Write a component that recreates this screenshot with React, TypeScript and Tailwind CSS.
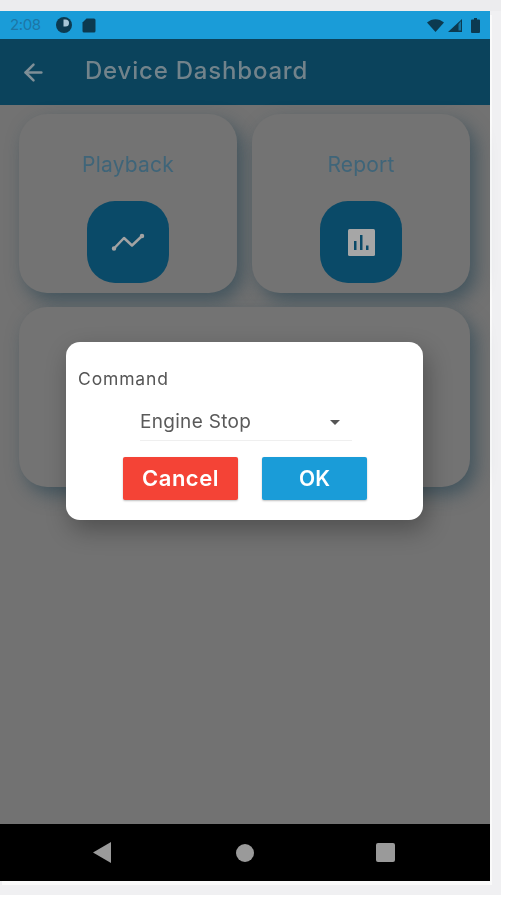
import { ArrowLeft } from "lucide-react";

const CardIcon = ({ children }: { children: React.ReactNode }) => (
  <div className="w-[82px] h-[82px] rounded-[28px] bg-[#0a4a68] flex items-center justify-center">
    {children}
  </div>
);

const Card = ({ title, children }: { title: string; children: React.ReactNode }) => (
  <div className="flex-1 h-[179px] rounded-[28px] bg-[#737373] shadow-[6px_8px_18px_rgba(35,65,80,0.6)] flex flex-col items-center pt-[38px]">
    <span className="text-[21px] leading-[26px] tracking-[0.2px] text-[#3f6579] mb-[23px]">{title}</span>
    {children}
  </div>
);

const App = () => {
  return (
    <div className="w-[512px] h-[900px] bg-white overflow-hidden font-['Inter',sans-serif]">
      <div className="w-[501px] h-[895px] bg-[#f0f0f2] blur-[0.5px] flex flex-col">
        <div className="h-[11px] bg-[#ececee] shrink-0" />
        <div className="relative w-[490px] h-[870px] flex flex-col shrink-0 shadow-[2px_4px_0_#fafafa]">
          {/* status bar */}
          <div className="h-[28px] bg-[#1a9cd8] flex items-center pl-[10px] pr-[10px] shrink-0">
            <span className="text-[15px] tracking-[-0.4px] text-[#1d76a6] w-[44px]">2:08</span>
            <svg width="20" height="20" viewBox="0 0 20 20">
              <circle cx="10" cy="10" r="8" fill="#0c3a50" />
              <path d="M9.500 4.500h2a3.500 3.500 0 0 1 0 7h-2z" fill="#a9c6d6" />
            </svg>
            <svg width="14" height="15" viewBox="0 0 14 15" className="ml-[8px]">
              <path d="M4.500 0.500H12a1.500 1.500 0 0 1 1.500 1.500V13a1.500 1.500 0 0 1-1.500 1.500H2A1.500 1.500 0 0 1 0.500 13V4.500z" fill="#0c3a50" />
            </svg>
            <div className="flex-1" />
            <svg width="17" height="13" viewBox="0 0 17 13">
              <path d="M0 3.500C5-1 12-1 17 3.500L8.500 13z" fill="#0c3a50" />
            </svg>
            <svg width="14" height="13" viewBox="0 0 14 13" className="ml-[4px]">
              <path d="M14 0v13H0z" fill="#0c3a50" />
              <path d="M10.500 5v6.500H13V2z" fill="#1a9cd8" opacity="0.6" />
            </svg>
            <svg width="9" height="15" viewBox="0 0 9 15" className="ml-[9px]">
              <path d="M3 0h3v1.500h2a1 1 0 0 1 1 1V14a1 1 0 0 1-1 1H1a1 1 0 0 1-1-1V2.500a1 1 0 0 1 1-1h2z" fill="#0c3a50" />
            </svg>
          </div>

          {/* app bar */}
          <div className="h-[66px] bg-[#0b435c] flex items-center pl-[20px] shrink-0">
            <ArrowLeft className="w-[27px] h-[27px] text-[#7f8f97]" strokeWidth={2.2} />
            <span className="ml-[38px] text-[24px] font-medium tracking-[0.8px] text-[#72838b] -mt-[2px]">Device Dashboard</span>
          </div>

          {/* body */}
          <div className="flex-1 bg-[#727272] pl-[19px] pt-[9px] pr-[20px] flex flex-col gap-[14px]">
            <div className="flex gap-[15px]">
              <Card title="Playback">
                <CardIcon>
                  <svg width="34" height="18" viewBox="0 0 34 18" fill="none" stroke="#a3a3a3" strokeWidth="2.500" strokeLinecap="round" strokeLinejoin="round">
                    <path d="M3 15.500L13 5L21 12.500L31 3" />
                    <circle cx="3" cy="15.500" r="1" />
                    <circle cx="31" cy="3" r="1" />
                  </svg>
                </CardIcon>
              </Card>
              <Card title="Report">
                <CardIcon>
                  <svg width="27" height="27" viewBox="0 0 27 27">
                    <rect width="27" height="27" rx="1.500" fill="#a6a6a6" />
                    <rect x="6" y="12" width="2.500" height="9" fill="#0a4a68" />
                    <rect x="12" y="6" width="2.500" height="15" fill="#0a4a68" />
                    <rect x="18" y="16.500" width="2.500" height="4.500" fill="#0a4a68" />
                  </svg>
                </CardIcon>
              </Card>
            </div>
            <div className="h-[180px] rounded-[28px] bg-[#737373] shadow-[6px_8px_18px_rgba(35,65,80,0.6)]" />
          </div>

          {/* nav bar */}
          <div className="h-[57px] bg-black flex items-center shrink-0 pl-[93px]">
            <svg width="18" height="21" viewBox="0 0 18 21">
              <path d="M18 0v21L0 10.500z" fill="#9a9a9a" />
            </svg>
            <div className="ml-[125px] w-[18px] h-[18px] rounded-full bg-[#9a9a9a]" />
            <div className="ml-[122px] w-[19px] h-[19px] rounded-[2px] bg-[#9a9a9a]" />
          </div>

          {/* command dialog */}
          <div className="absolute left-[66px] top-[331px] w-[357px] h-[178px] rounded-[14px] bg-white shadow-[4px_10px_24px_rgba(0,0,0,0.3)] pl-[12px] pt-[27px]">
            <p className="text-[17.500px] leading-[20px] tracking-[0.85px] text-[#555555]">Command</p>
            <div className="ml-[62px] mt-[10px] w-[212px] h-[42px] border-b border-[#efefef] flex items-center justify-between pr-[12px]">
              <span className="text-[19px] tracking-[0.3px] text-[#5a5a5a] mt-[5px]">Engine Stop</span>
              <span className="w-0 h-0 mt-[5px] border-x-[5.500px] border-x-transparent border-t-[5.500px] border-t-[#555555]" />
            </div>
            <div className="flex ml-[45px] mt-[16px] gap-[24px]">
              <button className="w-[115px] h-[43px] rounded-[2px] bg-[#f44336] text-white text-[22px] font-semibold tracking-[0.5px] shadow-[0_1px_2px_rgba(0,0,0,0.25)]">Cancel</button>
              <button className="w-[105px] h-[43px] rounded-[2px] bg-[#1a9cd8] text-white text-[21px] font-semibold shadow-[0_1px_2px_rgba(0,0,0,0.25)]">OK</button>
            </div>
          </div>
        </div>
      </div>
    </div>
  );
};

export default App;
